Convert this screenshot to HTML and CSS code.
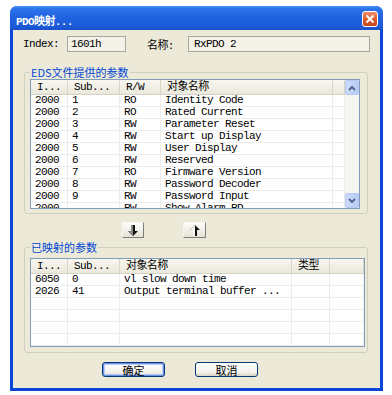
FILE: index.html
```html
<!DOCTYPE html>
<html lang="zh-CN">
<head>
  <meta charset="UTF-8">
  <title>PDO映射</title>
  <link rel="stylesheet" href="styles.css">
</head>
<body>
  <div class="window">
    <div class="titlebar">
      <span class="title">PDO映射...</span>
      <span class="close">
        <svg width="14" height="14" viewBox="0 0 14 14"><path d="M3.5 3.5 L10.5 10.5 M10.5 3.5 L3.5 10.5" stroke="#fff" stroke-width="2" fill="none"/></svg>
      </span>
    </div>
    <div class="content">
      <div class="fields">
        <span class="label">Index:</span>
        <span class="field short">1601h</span>
        <span class="label name">名称:</span>
        <span class="field long">RxPDO 2</span>
      </div>

      <fieldset class="group eds">
        <legend>EDS文件提供的参数</legend>
        <div class="list">
          <div class="grid">
            <div class="row head"><span>I...</span><span>Sub...</span><span>R/W</span><span>对象名称</span><span></span></div>
            <div class="row"><span>2000</span><span>1</span><span>RO</span><span>Identity Code</span><span></span></div>
            <div class="row"><span>2000</span><span>2</span><span>RO</span><span>Rated Current</span><span></span></div>
            <div class="row"><span>2000</span><span>3</span><span>RW</span><span>Parameter Reset</span><span></span></div>
            <div class="row"><span>2000</span><span>4</span><span>RW</span><span>Start up Display</span><span></span></div>
            <div class="row"><span>2000</span><span>5</span><span>RW</span><span>User Display</span><span></span></div>
            <div class="row"><span>2000</span><span>6</span><span>RW</span><span>Reserved</span><span></span></div>
            <div class="row"><span>2000</span><span>7</span><span>RO</span><span>Firmware Version</span><span></span></div>
            <div class="row"><span>2000</span><span>8</span><span>RW</span><span>Password Decoder</span><span></span></div>
            <div class="row"><span>2000</span><span>9</span><span>RW</span><span>Password Input</span><span></span></div>
            <div class="row"><span>2000</span><span></span><span>RW</span><span>Show Alarm  PD</span><span></span></div>
          </div>
          <div class="scrollbar">
            <div class="arrow">
              <svg width="8" height="6" viewBox="0 0 8 6"><path d="M1 5 L4 2 L7 5" stroke="#4D6185" stroke-width="1.8" fill="none"/></svg>
            </div>
            <div class="track"></div>
            <div class="arrow">
              <svg width="8" height="6" viewBox="0 0 8 6"><path d="M1 1 L4 4 L7 1" stroke="#4D6185" stroke-width="1.8" fill="none"/></svg>
            </div>
          </div>
        </div>
      </fieldset>

      <div class="moves">
        <button class="move">
          <svg width="12" height="13" viewBox="0 0 12 13"><polygon points="4,1 8,1 8,7 11,7 6,12 1,7 4,7" fill="#111"/><polygon points="4,1 6,1 6,12 1,7 4,7" fill="#8a8a8a"/></svg>
        </button>
        <button class="move wide">
          <svg width="12" height="13" viewBox="0 0 12 13"><polygon points="6,1 11,6 8,6 8,12 4,12 4,6 1,6" fill="#111"/><polygon points="6,1 6,12 4,12 4,6 1,6" fill="#f4f4f4"/></svg>
        </button>
      </div>

      <fieldset class="group mapped">
        <legend>已映射的参数</legend>
        <div class="list">
          <div class="grid">
            <div class="row head"><span>I...</span><span>Sub...</span><span>对象名称</span><span>类型</span><span></span></div>
            <div class="row"><span>6050</span><span>0</span><span>vl slow down time</span><span></span><span></span></div>
            <div class="row"><span>2026</span><span>41</span><span>Output terminal buffer ...</span><span></span><span></span></div>
            <div class="row"><span></span><span></span><span></span><span></span><span></span></div>
            <div class="row"><span></span><span></span><span></span><span></span><span></span></div>
            <div class="row"><span></span><span></span><span></span><span></span><span></span></div>
            <div class="row"><span></span><span></span><span></span><span></span><span></span></div>
          </div>
        </div>
      </fieldset>

      <div class="actions">
        <button class="btn default">确定</button>
        <button class="btn">取消</button>
      </div>
    </div>
  </div>
</body>
</html>
```

FILE: styles.css
```css
body {
  margin: 0;
  background: #ffffff;
  font-family: "Liberation Mono", "Noto Sans CJK SC", monospace;
  font-size: 11px;
  color: #000;
}

.window {
  margin: 6px 0 0 10px;
  width: 373px;
  border-radius: 7px 7px 0 0;
  background: #0A47D8;
  overflow: hidden;
}

.titlebar {
  height: 24px;
  display: flex;
  align-items: center;
  justify-content: space-between;
  padding: 0 5px 0 6px;
  background: linear-gradient(#4C93F6 0%, #2C72E9 12%, #1E62E0 50%, #1C5BD8 85%, #184FC8 100%);
}

.title {
  color: #fff;
  font-weight: bold;
  letter-spacing: -0.6px;
  margin-top: 3px;
}

.close {
  width: 16px;
  height: 16px;
  box-sizing: border-box;
  border: 1px solid #fff;
  border-radius: 3px;
  background: linear-gradient(#EE8D6C, #DA5A2A 55%, #C4431C);
  display: flex;
  align-items: center;
  justify-content: center;
  margin-top: 2px;
}

.content {
  background: #ECE9D8;
  margin: 0 3px 3px;
  padding: 6px 0 11px;
}

.fields {
  display: flex;
  align-items: center;
  height: 16px;
  padding-left: 10px;
  letter-spacing: -0.6px;
}

.label {
  width: 44px;
}

.label.name {
  width: 41px;
  margin-left: 21px;
}

.field {
  height: 16px;
  box-sizing: border-box;
  border: 1px solid #A8A79C;
  background: #F3F1E8;
  line-height: 14px;
  padding-left: 3px;
}

.field.short {
  width: 59px;
}

.field.long {
  width: 182px;
  padding-left: 5px;
}

.group {
  margin: 13px 12px 0 11px;
  padding: 0 7px 4px 5px;
  border: 1px solid #D0D0BF;
  border-radius: 3px;
  min-width: 0;
}

.group legend {
  padding: 0 1px;
  height: 14px;
  line-height: 14px;
  color: #0046D5;
  font-family: "Noto Sans CJK SC", sans-serif;
  font-size: 11px;
}

.group.mapped {
  margin-top: 2px;
  padding: 4px 2px 5px 5px;
}

.list {
  display: flex;
  height: 130px;
  box-sizing: border-box;
  border: 1px solid #7F9DB9;
  background: #fff;
  overflow: hidden;
}

.mapped .list {
  height: 89px;
}

.grid {
  flex: 1;
  overflow: hidden;
}

.row {
  display: grid;
  height: 12px;
  box-sizing: border-box;
  border-bottom: 1px solid #ECECEC;
  line-height: 11px;
}

.eds .row {
  grid-template-columns: 37px 52px 41px 172px 12px;
}

.mapped .row {
  grid-template-columns: 37px 52px 172px 38px 34px;
}

.row span {
  border-right: 1px solid #ECECEC;
  padding-left: 4px;
  white-space: nowrap;
  overflow: hidden;
  letter-spacing: -0.6px;
}

.row.head {
  height: 15px;
  line-height: 15px;
  background: linear-gradient(#F7F6F0, #EBE9DC);
  border-bottom: 1px solid #D5D2C3;
}

.row.head span {
  border-right-color: #D9D6C6;
  padding-left: 6px;
}

.scrollbar {
  width: 14px;
  display: flex;
  flex-direction: column;
  background: #F6F5F0;
}

.arrow {
  height: 15px;
  box-sizing: border-box;
  border: 1px solid #B5C8F3;
  border-radius: 2px;
  background: linear-gradient(90deg, #CCDAFB, #B9CCF7);
  display: flex;
  align-items: center;
  justify-content: center;
}

.track {
  flex: 1;
}

.moves {
  display: flex;
  gap: 39px;
  padding-left: 109px;
  margin-top: 8px;
  height: 16px;
}

.move {
  width: 22px;
  height: 16px;
  padding: 0;
  box-sizing: border-box;
  border: 1px solid;
  border-color: #F4F4F0 #7E7E7E #7E7E7E #F4F4F0;
  background: linear-gradient(#FDFDFB, #E4E1D4);
  display: flex;
  align-items: center;
  justify-content: center;
}

.move.wide {
  width: 23px;
}

.actions {
  display: flex;
  gap: 30px;
  padding-left: 89px;
  margin-top: 9px;
}

.btn {
  width: 63px;
  height: 15px;
  padding: 0;
  box-sizing: border-box;
  border: 1px solid #003C74;
  border-radius: 3px;
  background: linear-gradient(#FFFFFF, #F3F2EC 70%, #D8D3C6);
  font-family: "Noto Sans CJK SC", sans-serif;
  font-size: 11px;
  line-height: 12px;
  color: #000;
}

.btn.default {
  box-shadow: inset 0 0 0 1px #6F8FE6, inset 0 0 0 2px #B8CCF6;
}
```
